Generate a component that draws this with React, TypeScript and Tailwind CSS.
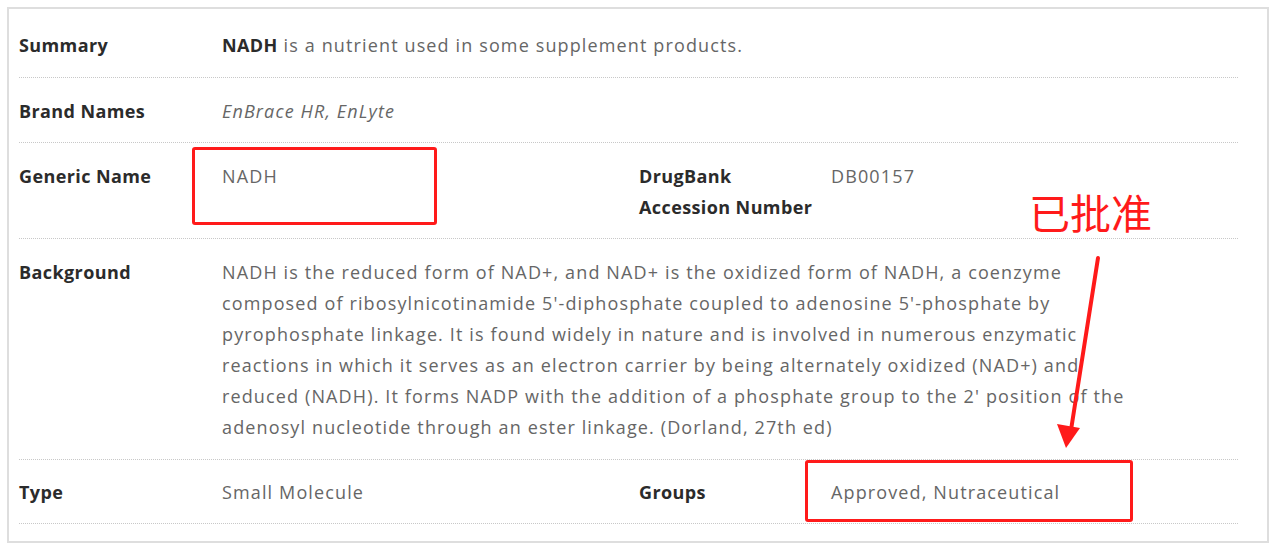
import React from "react";

const Sep = () => <div className="border-b border-dotted border-[#c8c8c8]" />;

const Label = ({ children, w }: { children: React.ReactNode; w: string }) => (
  <div className={`${w} shrink-0 font-bold text-[#2b2b2b] tracking-[0.4px]`}>{children}</div>
);

export default function App() {
  const font = { fontFamily: '"Open Sans", "Noto Sans", sans-serif' };
  return (
    <div className="w-[1280px] h-[555px] bg-white relative overflow-hidden" style={font}>
      <div className="absolute left-[7px] top-[7px] w-[1262px] h-[536px] border-2 border-[#dedede] pl-[10px] pr-[29px] pt-[3px] text-[18px] leading-[31px] text-[#666] tracking-[1.13px]">
        {/* Summary */}
        <div className="flex pt-[18px] pb-[16px]">
          <Label w="w-[203px]">Summary</Label>
          <div>
            <span className="font-bold text-[#2b2b2b] tracking-[0.4px]">NADH</span> is a nutrient used in some supplement products.
          </div>
        </div>
        <Sep />
        {/* Brand names */}
        <div className="flex pt-[18px] pb-[15px]">
          <Label w="w-[203px]">Brand Names</Label>
          <div className="italic">EnBrace HR, EnLyte</div>
        </div>
        <Sep />
        {/* Generic / DrugBank */}
        <div className="flex pt-[18px] pb-[15px]">
          <Label w="w-[203px]">Generic Name</Label>
          <div className="w-[417px] shrink-0">NADH</div>
          <Label w="w-[192px]">
            DrugBank
            <br />
            Accession Number
          </Label>
          <div>DB00157</div>
        </div>
        <Sep />
        {/* Background */}
        <div className="flex pt-[18px] pb-[16px]">
          <Label w="w-[203px]">Background</Label>
          <div className="w-[922px]">
            NADH is the reduced form of NAD+, and NAD+ is the oxidized form of NADH, a coenzyme composed of
            ribosylnicotinamide 5'-diphosphate coupled to adenosine 5'-phosphate by pyrophosphate linkage. It is found
            widely in nature and is involved in numerous enzymatic reactions in which it serves as an electron carrier
            by being alternately oxidized (NAD+) and reduced (NADH). It forms NADP with the addition of a phosphate
            group to the 2' position of the adenosyl nucleotide through an ester linkage. (Dorland, 27th ed)
          </div>
        </div>
        <Sep />
        {/* Type / Groups */}
        <div className="flex pt-[17px] pb-[15px]">
          <Label w="w-[203px]">Type</Label>
          <div className="w-[417px] shrink-0">Small Molecule</div>
          <Label w="w-[192px]">Groups</Label>
          <div>Approved, Nutraceutical</div>
        </div>
        <Sep />
      </div>

      {/* Annotations */}
      <div className="absolute left-[192px] top-[147px] w-[245px] h-[78px] border-[3px] border-[#ff1a1a] rounded-[3px]" />
      <div className="absolute left-[805px] top-[460px] w-[328px] h-[62px] border-[3px] border-[#ff1a1a] rounded-[3px]" />
      <div
        className="absolute left-[1029px] top-[187px] text-[41px] leading-[48px] text-[#ff1a1a]"
        style={{ fontFamily: '"Noto Sans CJK SC", sans-serif' }}
      >
        已批准
      </div>
      <svg className="absolute left-0 top-0" width="1280" height="555" viewBox="0 0 1280 555">
        <line x1="1098" y1="258" x2="1071" y2="430" stroke="#ff1a1a" strokeWidth="4" strokeLinecap="round" />
        <polygon points="1057,424 1080,428 1066,448" fill="#ff1a1a" />
      </svg>
    </div>
  );
}
